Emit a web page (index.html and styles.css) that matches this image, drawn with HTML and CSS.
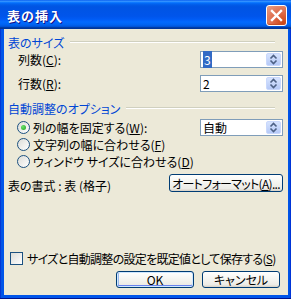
FILE: index.html
```html
<!DOCTYPE html>
<html lang="ja">
<head>
<meta charset="utf-8">
<link rel="stylesheet" href="styles.css">
</head>
<body>
<div class="window">
  <div class="titlebar">
    <span class="title">表の挿入</span>
    <span class="close">
      <svg width="13" height="13" viewBox="0 0 13 13"><path d="M2 2 L11 11 M11 2 L2 11" stroke="#fff" stroke-width="2.4" stroke-linecap="square"/></svg>
    </span>
  </div>
  <div class="client">
    <div class="group-head"><span>表のサイズ</span><i class="rule"></i></div>
    <div class="row field first">
      <span class="lbl">列数(<u>C</u>):</span>
      <div class="spin"><span class="val"><span class="sel">3</span></span><span class="spinbtn"><svg width="9" height="11" viewBox="0 0 9 11"><path d="M1.5 4.5 L4.5 1.5 L7.5 4.5 M1.5 6.5 L4.5 9.5 L7.5 6.5" fill="none" stroke="#4D6185" stroke-width="1.6"/></svg></span></div>
    </div>
    <div class="row field second">
      <span class="lbl">行数(<u>R</u>):</span>
      <div class="spin"><span class="val">2</span><span class="spinbtn"><svg width="9" height="11" viewBox="0 0 9 11"><path d="M1.5 4.5 L4.5 1.5 L7.5 4.5 M1.5 6.5 L4.5 9.5 L7.5 6.5" fill="none" stroke="#4D6185" stroke-width="1.6"/></svg></span></div>
    </div>
    <div class="group-head g2"><span>自動調整のオプション</span><i class="rule"></i></div>
    <div class="row opt o1">
      <span class="radio on"></span><span class="otext">列の幅を固定する(<u>W</u>):</span>
      <div class="spin"><span class="val">自動</span><span class="spinbtn"><svg width="9" height="11" viewBox="0 0 9 11"><path d="M1.5 4.5 L4.5 1.5 L7.5 4.5 M1.5 6.5 L4.5 9.5 L7.5 6.5" fill="none" stroke="#4D6185" stroke-width="1.6"/></svg></span></div>
    </div>
    <div class="row opt">
      <span class="radio"></span><span class="otext">文字列の幅に合わせる(<u>F</u>)</span>
    </div>
    <div class="row opt">
      <span class="radio"></span><span class="otext">ウィンドウ サイズに合わせる(<u>D</u>)</span>
    </div>
    <div class="row fmt">
      <span class="fmttext">表の書式 : 表 (格子)</span>
      <span class="btn autofmt">オートフォーマット(<u>A</u>)...</span>
    </div>
    <div class="row chk">
      <span class="check"></span><span class="ctext">サイズと自動調整の設定を既定値として保存する(<u>S</u>)</span>
    </div>
    <div class="row buttons">
      <span class="btn ok">OK</span>
      <span class="btn cancel">キャンセル</span>
    </div>
  </div>
</div>
</body>
</html>
```
FILE: styles.css
```css
html, body {
  margin: 0;
  padding: 0;
  background: #fff;
}
.window {
  width: 291px;
  height: 299px;
  display: flex;
  flex-direction: column;
  background: linear-gradient(to right, #0019CF 0, #0855DD 1px, #0055EA 2px, #0055EA 288px, #0050E0 290px, #0019CF 291px);
  font-family: "Noto Sans CJK JP", sans-serif;
  font-size: 12px;
  font-feature-settings: "palt";
  color: #000;
  box-sizing: border-box;
  border-bottom: 1px solid #00138C;
  white-space: nowrap;
}
.titlebar {
  height: 29px;
  flex: none;
  display: flex;
  align-items: center;
  justify-content: space-between;
  padding: 0 4px 0 7px;
  background: linear-gradient(to bottom, #0058EE 0%, #3A93FF 4%, #288EFF 6%, #127DFF 8%, #036FFC 10%, #0262EE 14%, #0057E5 20%, #0054E3 24%, #0055EB 56%, #005BF5 66%, #026AFE 76%, #0062EF 86%, #0052D6 92%, #0040AB 94%, #003092 100%);
}
.title {
  color: #fff;
  font-weight: bold;
  font-size: 13px;
  text-shadow: 1px 1px #0F1089;
  font-feature-settings: normal;
  letter-spacing: 1px;
  padding-top: 1px;
}
.close {
  width: 21px;
  height: 21px;
  box-sizing: border-box;
  border: 1px solid #fff;
  border-radius: 3px;
  display: flex;
  align-items: center;
  justify-content: center;
  background: radial-gradient(circle at 85% 90%, #CC4614 0, #DC6543 40%, #E38163 70%, #E8A38A 100%);
  box-shadow: inset 0 -1px 1px #C14C26;
  margin-top: 2px;
}
.client {
  flex: 1;
  margin: 0 3px 3px 4px;
  background: #ECE9D8;
  display: flex;
  flex-direction: column;
  padding: 5px 5px 7px 4px;
}
.group-head {
  height: 16px;
  display: flex;
  align-items: center;
  color: #0046D5;
}
.group-head .rule {
  flex: 1;
  height: 0;
  border-top: 1px solid #D0D0BF;
  border-bottom: 1px solid #fff;
  margin: 0 8px 0 6px;
}
.g2 { margin-top: 8px; }
.row {
  display: flex;
  align-items: center;
}
.field {
  height: 17px;
  margin-left: 10px;
}
.field.first { margin-top: 1px; }
.field.second { margin-top: 7px; }
.lbl { flex: 1; }
.spin {
  margin-left: auto;
  width: 83px;
  height: 17px;
  flex: none;
  box-sizing: border-box;
  border: 1px solid #7F9DB9;
  background: #fff;
  display: flex;
  align-items: center;
  padding: 0 1px 0 1px;
}
.val {
  flex: 1;
  padding-left: 1px;
  line-height: 13px;
}
.sel {
  background: #316AC5;
  color: #fff;
  padding: 0 1px;
}
.spinbtn {
  width: 15px;
  height: 13px;
  border-radius: 2px;
  background: linear-gradient(#D6E3FE, #B5C9F7);
  border: 1px solid #C9D8FC;
  box-sizing: border-box;
  display: flex;
  align-items: center;
  justify-content: center;
}
.opt {
  height: 17px;
  margin-left: 9px;
}
.opt.o1 { margin-top: 3px; }
.radio {
  width: 13px;
  height: 13px;
  box-sizing: border-box;
  border: 1px solid #1C5180;
  border-radius: 50%;
  background: linear-gradient(135deg, #DCDCD7, #fff);
  display: flex;
  align-items: center;
  justify-content: center;
  flex: none;
}
.radio.on::after {
  content: "";
  width: 5px;
  height: 5px;
  border-radius: 50%;
  background: radial-gradient(circle at 35% 35%, #6BE36B, #21A121);
}
.otext { margin-left: 3px; }
.fmt {
  height: 18px;
  margin-top: 4px;
}
.fmttext { flex: 1; margin-top: 4px; }
.btn {
  box-sizing: border-box;
  border: 1px solid #003C74;
  border-radius: 3px;
  background: linear-gradient(#FFFFFF 0%, #F4F4F0 50%, #ECEBE6 85%, #D6D0C5 100%);
  display: flex;
  align-items: center;
  justify-content: center;
  flex: none;
}
.autofmt {
  width: 114px;
  height: 18px;
  letter-spacing: -0.7px;
}
.chk {
  margin-top: auto;
  height: 16px;
  margin-left: 2px;
}
.check {
  width: 13px;
  height: 13px;
  box-sizing: border-box;
  border: 1px solid #1C5180;
  background: linear-gradient(135deg, #DCDCD7, #fff);
  flex: none;
}
.ctext { margin-left: 4px; letter-spacing: -0.7px; }
.buttons {
  margin-top: 5px;
  height: 17px;
  justify-content: flex-end;
  gap: 8px;
  padding-right: 3px;
}
.ok, .cancel {
  width: 78px;
  height: 17px;
}
.ok {
  box-shadow: inset 0 0 0 1px #CEE7FF, inset 0 -1px 0 1px #6982EE, inset 1px 0 0 1px #9DB9EB;
}
u { text-decoration: underline; text-underline-offset: 1px; }
```
